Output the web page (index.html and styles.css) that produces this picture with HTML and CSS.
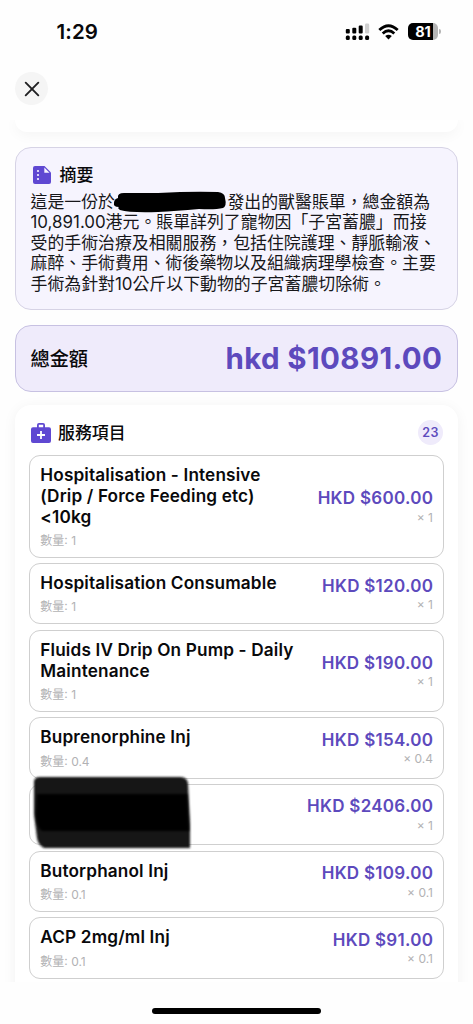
FILE: index.html
```html
<!DOCTYPE html>
<html lang="zh-Hant">
<head>
<meta charset="utf-8">
<meta name="viewport" content="width=device-width, initial-scale=1">
<title>摘要</title>
<link rel="stylesheet" href="styles.css">
</head>
<body>
<div class="screen">
  <div class="status">
    <span class="time">1:29</span>
    <div class="indicators">
      <svg class="signal" width="25" height="18" viewBox="0 0 25 18">
        <rect x="0.8" y="6" width="4" height="4.6" rx="1.1"/><rect x="7.3" y="4.7" width="4" height="5.9" rx="1.1"/><rect x="13.7" y="2.6" width="4" height="8" rx="1.1"/>
        <rect x="20" y="0.6" width="4.2" height="10" rx="1.4" fill="#cfcfcf"/>
        <rect x="0.8" y="12.6" width="4" height="4.4" rx="1.5"/><rect x="7.3" y="12.6" width="4" height="4.4" rx="1.5"/><rect x="13.7" y="12.6" width="4" height="4.4" rx="1.5"/><rect x="20.1" y="12.6" width="4" height="4.4" rx="1.5"/>
      </svg>
      <svg class="wifi" width="21" height="16" viewBox="0 0 21 16">
        <g fill="none" stroke="#000" stroke-width="2.8"><path d="M1.3 6Q10.5-2.5 19.7 6"/><path d="M4.7 9.5Q10.500 4 16.3 9.5"/></g>
        <path d="M10.500 15.500L7.200 12.100Q10.500 9.600 13.800 12.100Z"/>
      </svg>
      <div class="battery"><span class="level">81</span><i class="cap"></i></div>
    </div>
  </div>
  <header class="header">
    <button class="close" aria-label="關閉"><svg width="16" height="16" viewBox="0 0 16 16"><path d="M1.700 1.700L14.300 14.300M14.300 1.700L1.700 14.300" fill="none" stroke="#202022" stroke-width="1.900" stroke-linecap="round"/></svg></button>
  </header>
  <main class="content">
    <div class="previous"></div>
    <section class="summary">
      <h2 class="heading"><svg width="18" height="18" viewBox="0 0 18 18"><path fill="#5f48d2" d="M2 0H11.500L18 6.500V16Q18 18 16 18H2Q0 18 0 16V2Q0 0 2 0Z"/><path fill="#f6f4fe" d="M11.300 1.500V6.700H16.500Z"/><g fill="#f6f4fe"><circle cx="5" cy="5" r="1.100"/><circle cx="5" cy="9" r="1.100"/><circle cx="5" cy="13" r="1.100"/></g></svg><span>摘要</span></h2>
      <div class="prose">
        <div>這是一份於<span class="redacted"><svg width="114" height="22" viewBox="0 0 114 22"><path d="M1 12Q1 8 5 7Q4 2 11 2L45 2Q80 0 105 1Q112 2 112 7Q114 15 110 17Q102 19 86 18Q63 20 45 21Q17 22 7 19Q4 17 6 16Q0 16 1 12Z"/></svg></span>發出的獸醫賬單，總金額為</div>
        <div>10,891.00港元。賬單詳列了寵物因「子宮蓄膿」而接</div>
        <div>受的手術治療及相關服務，包括住院護理、靜脈輸液、</div>
        <div>麻醉、手術費用、術後藥物以及組織病理學檢查。主要</div>
        <div>手術為針對10公斤以下動物的子宮蓄膿切除術。</div>
      </div>
    </section>
    <section class="total"><span class="total-label">總金額</span><span class="total-value">hkd $10891.00</span></section>
    <section class="services">
      <div class="services-head">
        <h2 class="heading"><svg width="20" height="20" viewBox="0 0 20 20"><path fill="#5f48d2" d="M2 4.200H6V2Q6 0 8 0H12Q14 0 14 2V4.200H18Q20 4.200 20 6.200V18Q20 20 18 20H2Q0 20 0 18V6.200Q0 4.200 2 4.200ZM7.800 4.200H12.200V1.800H7.800Z"/><path d="M10 8V16M6 12H14" stroke="#fff" stroke-width="1.800"/></svg><span>服務項目</span></h2>
        <span class="count">23</span>
      </div>
      <div class="list">
        <article class="item"><div class="info"><h3>Hospitalisation - Intensive<br>(Drip / Force Feeding etc)<br>&lt;10kg</h3><p class="qty">數量: 1</p></div><div class="cost"><b>HKD $600.00</b><small>× 1</small></div></article>
        <article class="item"><div class="info"><h3>Hospitalisation Consumable</h3><p class="qty">數量: 1</p></div><div class="cost"><b>HKD $120.00</b><small>× 1</small></div></article>
        <article class="item"><div class="info"><h3>Fluids IV Drip On Pump - Daily<br>Maintenance</h3><p class="qty">數量: 1</p></div><div class="cost"><b>HKD $190.00</b><small>× 1</small></div></article>
        <article class="item"><div class="info"><h3>Buprenorphine Inj</h3><p class="qty">數量: 0.4</p></div><div class="cost"><b>HKD $154.00</b><small>× 0.4</small></div></article>
        <article class="item"><svg class="marker" width="162" height="76" viewBox="0 0 162 76">
            <defs><filter id="soft" x="-10%" y="-10%" width="120%" height="120%"><feGaussianBlur stdDeviation="1.3"/></filter></defs>
            <path d="M8 3H149Q156 4 156 10L158 50V74H12Q6 71 5 64L2 40V7Q3 3 8 3Z" fill="#151515" filter="url(#soft)"/>
            <path d="M5 20H155L157 57H10Q5 54 4 42Z" fill="#000" filter="url(#soft)"/>
          </svg><div class="info"></div><div class="cost"><b>HKD $2406.00</b><small>× 1</small></div></article>
        <article class="item"><div class="info"><h3>Butorphanol Inj</h3><p class="qty">數量: 0.1</p></div><div class="cost"><b>HKD $109.00</b><small>× 0.1</small></div></article>
        <article class="item"><div class="info"><h3>ACP 2mg/ml Inj</h3><p class="qty">數量: 0.1</p></div><div class="cost"><b>HKD $91.00</b><small>× 0.1</small></div></article>
      </div>
    </section>
  </main>
  <footer class="home"><i class="home-bar"></i></footer>
</div>
</body>
</html>
```
FILE: styles.css
```css
* { box-sizing: border-box; margin: 0; padding: 0; }
body { background: #fefefe; color: #09090b; font-family: Inter, "Noto Sans CJK TC", sans-serif; }
.screen { width: 473px; height: 1024px; display: flex; flex-direction: column; overflow: hidden; }
.status { height: 55px; flex: none; display: flex; justify-content: space-between; align-items: center; padding: 8px 32px 0 56.500px; }
.time { font-size: 20.500px; font-weight: 600; letter-spacing: 0.100px; }
.indicators { display: flex; align-items: center; }
.signal { margin-right: 8px; }
.wifi { margin-right: 9px; }
.battery { display: flex; align-items: center; }
.level { width: 30px; height: 17px; border-radius: 5px; background: linear-gradient(90deg, #000 25px, #b5b5b5 25px); color: #fff; font-size: 14.500px; font-weight: 700; line-height: 17px; text-align: center; }
.cap { width: 2px; height: 5px; margin-left: 1px; border-radius: 0 2px 2px 0; background: #b5b5b5; }
.header { height: 65px; flex: none; padding: 17px 15px 0; }
.close { width: 33px; height: 33px; border: 0; border-radius: 50%; background: #f5f5f5; display: grid; place-items: center; }
.content { height: 862px; flex: none; overflow: hidden; padding: 0 15px; background: #fefefe; }
.previous { height: 11.500px; border-radius: 0 0 16px 16px; background: #fff; box-shadow: 0 2px 14px rgba(0, 0, 0, 0.05); margin-bottom: 15.500px; }
.summary { height: 163px; border: 1.300px solid #d6d3e5; border-radius: 16px; background: #f6f4fe; padding: 15px 0 0 14.500px; }
.heading { display: flex; align-items: center; font-size: 17px; font-weight: 600; line-height: 24px; }
.summary .heading { gap: 8.500px; padding-left: 2.500px; font-weight: 500; }
.prose { margin-top: 4.500px; font-size: 16.900px; line-height: 20.600px; white-space: nowrap; font-weight: 400; color: #17171a; }
.prose > div { height: 20.600px; }
.redacted { display: inline-block; position: relative; width: 112.500px; height: 10px; }
.redacted svg { position: absolute; left: -2px; top: -7px; }
.total { margin-top: 15px; height: 66.500px; border: 1.300px solid #c7c1e2; border-radius: 16px; background: #efebfb; display: flex; align-items: center; justify-content: space-between; padding: 0 15px 0 14.500px; }
.total-label { font-size: 19.200px; font-weight: 500; }
.total-value { margin-right: -0.300px; font-size: 29.500px; font-weight: 650; letter-spacing: 0.350px; color: #5d4abd; }
.services { margin-top: 13.500px; height: 700px; border-radius: 16px; background: #fff; box-shadow: 0 2px 14px rgba(0, 0, 0, 0.05); padding: 15px 14px 0; }
.services-head { height: 35px; display: flex; align-items: flex-start; justify-content: space-between; padding: 0 1px 0 2px; }
.services .heading { gap: 7px; line-height: 26px; font-size: 16.900px; font-weight: 500; }
.count { width: 25px; height: 25px; border-radius: 50%; background: #efebfb; color: #5d4abd; font-size: 12.500px; font-weight: 600; line-height: 26px; letter-spacing: 0.300px; text-align: center; }
.list { display: flex; flex-direction: column; gap: 5.300px; }
.item { position: relative; border: 1.300px solid #cfcfcf; border-radius: 11px; background: #fff; display: flex; align-items: center; justify-content: space-between; padding: 9.200px 10px 9px 10.300px; min-height: 61.400px; }
.info h3 { font-size: 17.200px; font-weight: 600; line-height: 20.700px; letter-spacing: 0.150px; white-space: nowrap; }
.qty { margin-top: 5.500px; font-size: 12px; line-height: 15px; color: #b2b2b4; }
.cost { display: flex; flex-direction: column; align-items: flex-end; white-space: nowrap; padding-top: 1px; }
.cost b { margin-right: -0.200px; font-size: 17px; font-weight: 600; line-height: 20px; letter-spacing: 0.280px; color: #5d4abd; }
.cost small { margin-top: 0.500px; font-size: 12px; line-height: 17px; color: #b2b2b4; }
.marker { position: absolute; left: 2px; top: -11px; }
.home { flex: 1; display: flex; justify-content: center; padding-top: 26px; }
.home-bar { width: 169px; height: 6px; border-radius: 3px; background: #000; }
```
